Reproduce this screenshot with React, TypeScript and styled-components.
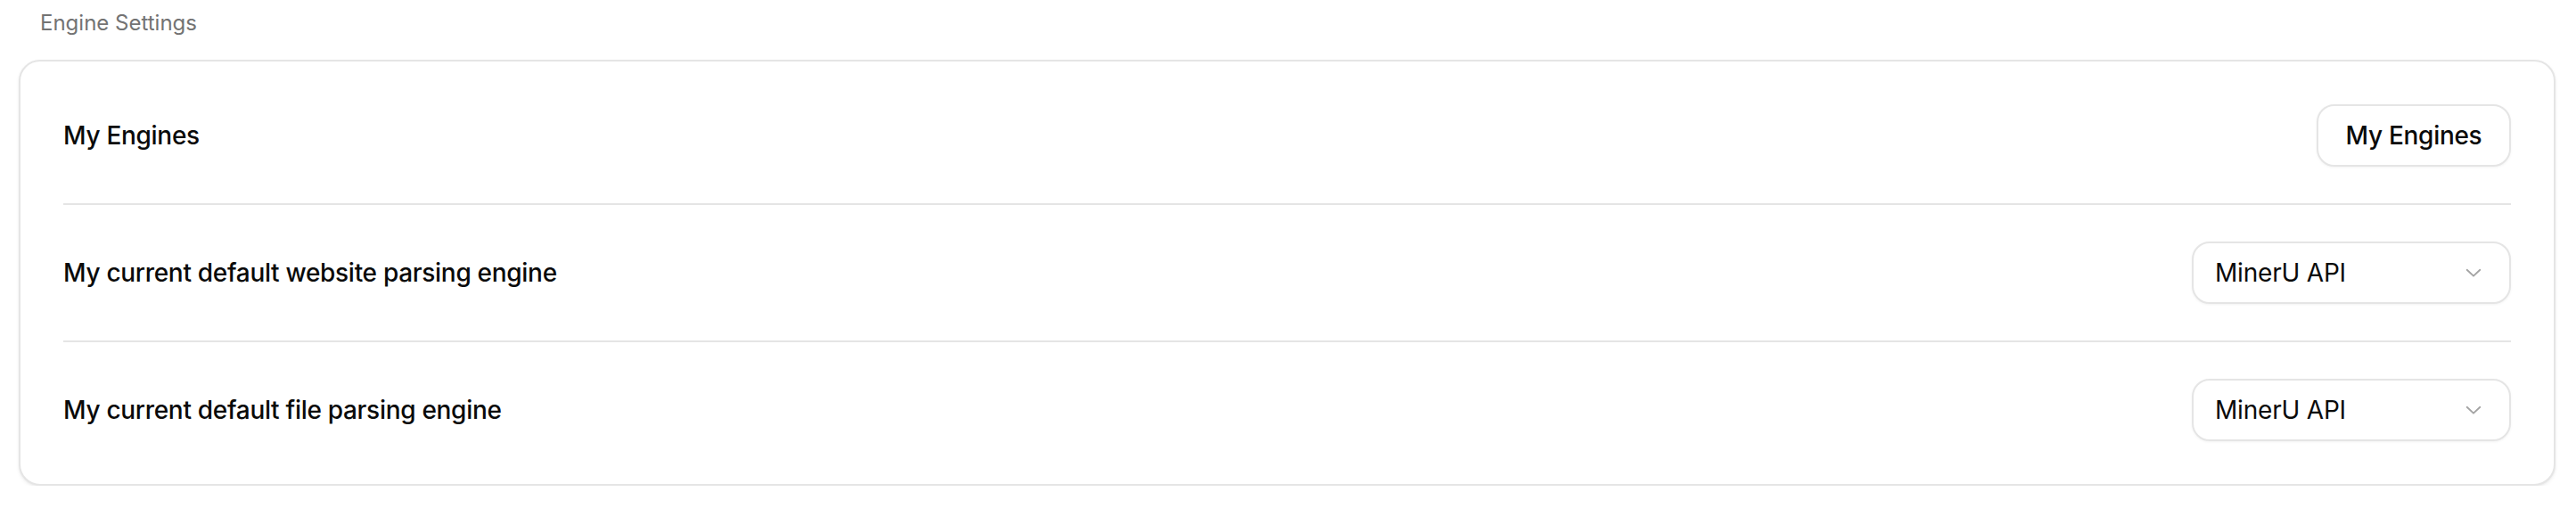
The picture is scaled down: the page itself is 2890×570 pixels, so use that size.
import React from "react";
import styled, { createGlobalStyle } from "styled-components";

const GlobalStyle = createGlobalStyle`
  html, body {
    margin: 0;
    padding: 0;
    background: #ffffff;
  }
  body {
    font-family: Inter, "Noto Sans", "Liberation Sans", sans-serif;
    color: #0a0a0a;
    -webkit-font-smoothing: antialiased;
  }
  * { box-sizing: border-box; }
`;

const Page = styled.div`
  padding: 10px 23px 0 21px;
  display: flex;
  flex-direction: column;
  gap: 25px;
`;

const SectionTitle = styled.div`
  padding-left: 24px;
  font-size: 24px;
  line-height: 32px;
  color: #737373;
  font-weight: 400;
`;

const Card = styled.div`
  border: 2px solid #e5e5e5;
  border-radius: 24px;
  background: #fff;
  box-shadow: 0 2px 4px rgba(0, 0, 0, 0.06), 0 1px 2px rgba(0, 0, 0, 0.04);
  padding: 7px 48px;
  display: flex;
  flex-direction: column;
`;

const Row = styled.div<{ $divider?: boolean }>`
  display: flex;
  align-items: center;
  justify-content: space-between;
  padding: 41px 0;
  border-top: ${(p) => (p.$divider ? "2px solid #e5e5e5" : "none")};
`;

const Label = styled.div`
  font-size: 28px;
  font-weight: 500;
  letter-spacing: -0.3px;
  color: #0a0a0a;
`;

const Button = styled.button`
  height: 70px;
  width: 218px;
  border: 2px solid #e5e5e5;
  border-radius: 20px;
  background: #fff;
  box-shadow: 0 1px 3px rgba(0, 0, 0, 0.05);
  font-family: inherit;
  font-size: 28px;
  font-weight: 500;
  letter-spacing: -0.3px;
  color: #0a0a0a;
  cursor: pointer;
`;

const Select = styled.button`
  height: 70px;
  width: 358px;
  border: 2px solid #e5e5e5;
  border-radius: 20px;
  background: #fff;
  box-shadow: 0 1px 3px rgba(0, 0, 0, 0.05);
  display: flex;
  align-items: center;
  justify-content: space-between;
  padding: 0 29px 0 24px;
  font-family: inherit;
  font-size: 28px;
  font-weight: 400;
  letter-spacing: -0.2px;
  color: #0a0a0a;
  cursor: pointer;
`;

const Chevron = () => (
  <svg width="22" height="22" viewBox="0 0 24 24" fill="none" stroke="#a3a3a3" strokeWidth="2" strokeLinecap="round" strokeLinejoin="round">
    <path d="M4 8.5l8 7.5 8-7.5" />
  </svg>
);

export default function App() {
  return (
    <>
      <GlobalStyle />
      <Page>
        <SectionTitle>Engine Settings</SectionTitle>
        <Card>
          <Row>
            <Label>My Engines</Label>
            <Button>My Engines</Button>
          </Row>
          <Row $divider>
            <Label>My current default website parsing engine</Label>
            <Select>
              <span>MinerU API</span>
              <Chevron />
            </Select>
          </Row>
          <Row $divider>
            <Label>My current default file parsing engine</Label>
            <Select>
              <span>MinerU API</span>
              <Chevron />
            </Select>
          </Row>
        </Card>
      </Page>
    </>
  );
}
